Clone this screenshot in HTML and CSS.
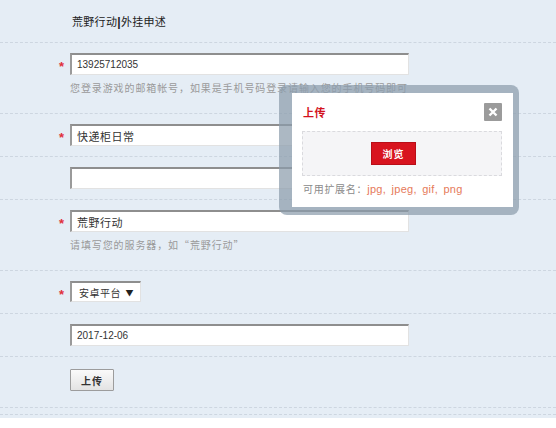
FILE: index.html
```html
<!DOCTYPE html>
<html lang="zh-CN">
<head>
    <meta charset="UTF-8">
    <meta name="viewport" content="width=device-width, initial-scale=1.0">
    <title>荒野行动 外挂申述</title>
    <link rel="stylesheet" href="styles.css">
</head>
<body>

<div class="page">
    <div class="row title-row">
        <span class="mark"></span>
        <h1 class="title">荒野行动<b>|</b>外挂申述</h1>
    </div>

    <div class="row">
        <span class="mark">*</span>
        <div class="field">
            <input class="text num" type="text" value="13925712035">
            <p class="hint">您登录游戏的邮箱帐号，如果是手机号码登录请输入您的手机号码即可</p>
        </div>
    </div>

    <div class="row">
        <span class="mark">*</span>
        <div class="field">
            <input class="text" type="text" value="快递柜日常">
        </div>
    </div>

    <div class="row">
        <span class="mark"></span>
        <div class="field">
            <input class="text" type="text" value="">
        </div>
    </div>

    <div class="row">
        <span class="mark">*</span>
        <div class="field">
            <input class="text" type="text" value="荒野行动">
            <p class="hint">请填写您的服务器，如“荒野行动”</p>
        </div>
    </div>

    <div class="row">
        <span class="mark">*</span>
        <div class="field">
            <div class="select">安卓平台<span class="arrow">▼</span></div>
        </div>
    </div>

    <div class="row">
        <span class="mark"></span>
        <div class="field">
            <input class="text num" type="text" value="2017-12-06">
        </div>
    </div>

    <div class="row last-row">
        <span class="mark"></span>
        <div class="field">
            <button class="submit" type="button">上传</button>
        </div>
    </div>

    <div class="row spacer"></div>
    <div class="footer"></div>

    <div class="dialog">
        <div class="dialog-inner">
            <div class="dialog-head">
                <span class="dialog-title">上传</span>
                <span class="close">
                    <svg width="10" height="10" viewBox="0 0 10 10">
                        <path d="M1.5 1.5L8.5 8.5M8.5 1.5L1.5 8.5" stroke="#fff" stroke-width="2.4"/>
                    </svg>
                </span>
            </div>
            <div class="drop">
                <button class="browse" type="button">浏览</button>
            </div>
            <p class="exts">可用扩展名：<span>jpg, jpeg, gif, png</span></p>
        </div>
    </div>
</div>

</body>
</html>
```

FILE: styles.css
```css
body {
    margin: 0;
    padding: 0;
    background-color: #e5edf5;
    font-family: "Noto Sans CJK SC", "Liberation Sans", sans-serif;
    color: #333;
}

.page {
    position: relative;
    width: 556px;
    height: 428px;
    overflow: hidden;
}

.row {
    display: flex;
    padding: 10px 0;
    border-bottom: 1px dashed #cdd6e0;
}

.title-row {
    height: 22px;
}

.last-row {
    padding: 12px 0 16px;
}

.title {
    margin: 0;
    font-size: 11px;
    font-weight: normal;
    line-height: 22px;
    letter-spacing: 0.3px;
    color: #222;
    padding-left: 2px;
}

.title b {
    font-family: "Liberation Sans", sans-serif;
    font-weight: bold;
    font-size: 12px;
}

.mark {
    width: 70px;
    height: 22px;
    flex: none;
    box-sizing: border-box;
    padding: 3px 6px 0 0;
    text-align: right;
    color: #e0303a;
    font-family: "Liberation Sans", sans-serif;
    font-size: 13px;
    font-weight: bold;
    line-height: 22px;
}

.field {
    display: flex;
    flex-direction: column;
}

.text {
    width: 339px;
    height: 22px;
    box-sizing: border-box;
    margin: 0;
    padding: 0 5px;
    background: #fff;
    border: 1px solid #e2e2e2;
    border-top: 2px solid #8e8e8e;
    border-left: 2px solid #9a9a9a;
    font-family: "Noto Sans CJK SC", sans-serif;
    font-size: 11px;
    letter-spacing: 0.5px;
    color: #333;
    outline: none;
}

.text.num {
    font-family: "Liberation Sans", sans-serif;
    font-size: 10px;
    letter-spacing: 0;
}

.hint {
    margin: 6px 0 8px;
    font-size: 10px;
    line-height: 14px;
    letter-spacing: 0.9px;
    color: #9a9a9a;
    white-space: nowrap;
}

.select {
    width: 71px;
    height: 21px;
    box-sizing: border-box;
    display: flex;
    align-items: center;
    justify-content: space-between;
    padding: 0 6px 0 7px;
    background: #fff;
    border: 1px solid #e2e2e2;
    border-top: 2px solid #8e8e8e;
    border-left: 2px solid #9a9a9a;
    font-size: 10px;
    letter-spacing: 0.5px;
    color: #333;
}

.arrow {
    font-size: 8px;
    color: #222;
}

.submit {
    width: 44px;
    height: 22px;
    padding: 0;
    background: linear-gradient(#fafafa, #e3e3e3);
    border: 1px solid #9c9c9c;
    border-radius: 1px;
    font-family: "Noto Sans CJK SC", sans-serif;
    font-size: 10px;
    font-weight: bold;
    letter-spacing: 1px;
    color: #333;
}

.spacer {
    height: 6px;
    padding: 0;
}

.footer {
    margin-top: 3px;
    height: 20px;
    background: #fff;
}

/* upload dialog floating over the form */
.dialog {
    position: absolute;
    left: 279px;
    top: 85px;
    width: 240px;
    height: 130px;
    box-sizing: border-box;
    padding: 8px 6px 8px 13px;
    background: rgba(140, 157, 172, 0.72);
    border-radius: 8px;
}

.dialog-inner {
    height: 100%;
    box-sizing: border-box;
    padding: 0 11px 0 10px;
    background: #fff;
}

.dialog-head {
    height: 38px;
    display: flex;
    align-items: center;
    justify-content: space-between;
}

.dialog-title {
    padding-left: 1px;
    font-size: 11px;
    font-weight: bold;
    color: #d3121d;
    letter-spacing: 0.5px;
}

.close {
    width: 18px;
    height: 18px;
    display: flex;
    align-items: center;
    justify-content: center;
    background: #9b9b9b;
    border-radius: 1px;
}

.drop {
    height: 45px;
    box-sizing: border-box;
    display: flex;
    align-items: center;
    padding-left: 68px;
    background: #f5f5f7;
    border: 1px dashed #dadade;
}

.browse {
    width: 45px;
    height: 23px;
    padding: 0;
    background: #d8141f;
    border: 1px solid #b80e18;
    font-family: "Noto Sans CJK SC", sans-serif;
    font-size: 10px;
    font-weight: bold;
    letter-spacing: 1px;
    color: #fff;
}

.exts {
    margin: 6px 0 0 1px;
    font-size: 10px;
    line-height: 14px;
    letter-spacing: 0.7px;
    color: #8a8a8a;
}

.exts span {
    font-family: "Liberation Sans", sans-serif;
    font-size: 11px;
    letter-spacing: 0.3px;
    word-spacing: 2px;
    color: #e67a5a;
}
```
